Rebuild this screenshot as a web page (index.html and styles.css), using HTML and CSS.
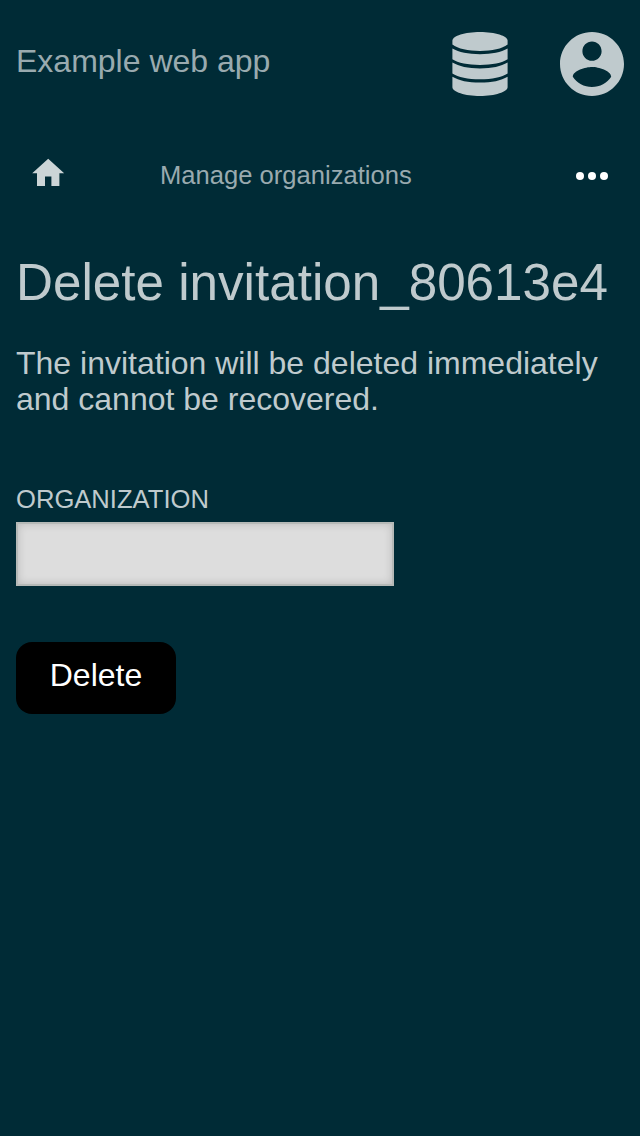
FILE: index.html
```html
<!DOCTYPE html>
<html lang="en">
<head>
<meta charset="utf-8">
<title>Delete invitation</title>
<link rel="stylesheet" href="styles.css">
</head>
<body>
<header class="header">
  <a class="app-name">Example web app</a>
  <div class="header-icons">
    <svg class="icon-database" viewBox="0 0 56 64" width="56" height="64">
      <path d="M28 0C13 0 .4 3.900 .4 8.700V12.500C6 16.800 16 18.900 28 18.900S50 16.800 55.600 12.500V8.700C55.600 3.900 43 0 28 0z"/>
      <path d="M.4 16.600C7 20.300 16 22.200 28 22.200S49 20.300 55.600 16.600V27.200C50 30.900 40 32.900 28 32.900S6 30.900 .4 27.200z"/>
      <path d="M.4 30.500C7 34.400 16 36.400 28 36.400S49 34.400 55.600 30.500V41.400C50 45.200 40 47.300 28 47.300S6 45.200 .4 41.400z"/>
      <path d="M.4 44.700C7 48.600 16 50.600 28 50.600S49 48.600 55.600 44.700V55.300C55.600 60 43 64 28 64S.4 60 .4 55.300z"/>
    </svg>
    <svg class="icon-account" viewBox="2 2 20 20" width="64" height="64">
      <path d="M12 2C6.480 2 2 6.480 2 12s4.480 10 10 10 10-4.480 10-10S17.520 2 12 2zm0 3c1.660 0 3 1.340 3 3s-1.340 3-3 3-3-1.340-3-3 1.340-3 3-3zm0 14.200c-2.500 0-4.710-1.280-6-3.220.03-1.990 4-3.080 6-3.080s5.970 1.090 6 3.080c-1.290 1.940-3.500 3.220-6 3.220z"/>
    </svg>
  </div>
</header>
<nav class="nav">
  <svg class="icon-home" viewBox="0 0 24 24" width="38.4" height="38.4"><path d="M10 20v-6h4v6h5v-8h3L12 3 2 12h3v8z"/></svg>
  <a class="nav-link">Manage organizations</a>
  <svg class="icon-more" viewBox="0 0 32 8" width="32" height="8"><circle cx="4" cy="4" r="4"/><circle cx="16" cy="4" r="4"/><circle cx="28" cy="4" r="4"/></svg>
</nav>
<main class="content">
  <h1 class="title">Delete invitation_80613e4</h1>
  <p class="message">The invitation will be deleted immediately and cannot be recovered.</p>
  <form class="form">
    <label class="label" for="organization">ORGANIZATION</label>
    <input class="field" id="organization" type="text">
    <button class="submit" type="button">Delete</button>
  </form>
</main>
</body>
</html>
```

FILE: styles.css
```css
* { box-sizing: border-box; }
body {
  margin: 0;
  min-height: 100vh;
  background: #002b36;
  color: #bfcacd;
  font: 32px/36px "Liberation Sans", Arial, sans-serif;
}
svg { display: block; }
.header {
  display: flex;
  justify-content: space-between;
  height: 128px;
  padding: 32px 16px 0;
}
.app-name {
  padding-top: 11px;
  color: #99aaaf;
}
.header-icons {
  display: flex;
  gap: 52px;
  fill: #bfcacd;
}
.nav {
  display: flex;
  align-items: flex-start;
  height: 96px;
  padding: 0 32px 0 28.8px;
}
.icon-home {
  margin-top: 25.6px;
  fill: #ccd5d7;
}
.nav-link {
  margin: 29px 0 0 92.8px;
  color: #99aaaf;
  font-size: 25.6px;
}
.icon-more {
  margin: 44px 0 0 auto;
  fill: #fff;
}
.content { padding: 30px 16px 0; }
.title {
  margin: 0;
  font-size: 51.2px;
  font-weight: 400;
  line-height: 58px;
}
.message { margin: 33px 0 0; }
.form {
  display: flex;
  flex-direction: column;
  align-items: flex-start;
  margin-top: 64px;
}
.label {
  font-size: 25.6px;
  line-height: 36px;
}
.field {
  width: 378px;
  height: 64px;
  margin-top: 5px;
  padding: 0 16px;
  border: 2px solid #b5b9b7;
  border-radius: 0;
  outline: 0;
  background: #ddd;
  box-shadow: inset 0 0 8px rgba(0, 0, 0, .16);
  font: inherit;
}
.submit {
  width: 160px;
  height: 72px;
  margin-top: 56px;
  padding: 0 0 6px;
  border: 0;
  border-radius: 16px;
  background: #000;
  color: #fff;
  font: inherit;
}
```
